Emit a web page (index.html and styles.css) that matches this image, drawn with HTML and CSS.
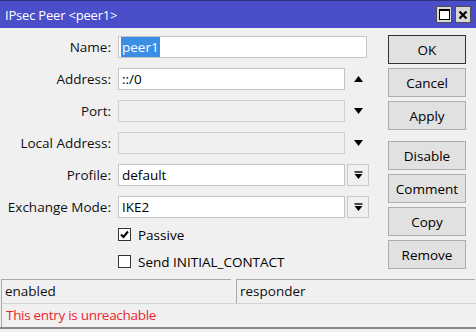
FILE: index.html
```html
<!DOCTYPE html>
<html>
<head>
<meta charset="utf-8">
<link rel="stylesheet" href="styles.css">
</head>
<body>
<div class="window">
  <div class="titlebar">
    <span class="title">IPsec Peer &lt;peer1&gt;</span>
    <div class="tbtns">
      <span class="tbtn"><span class="maxbox"></span></span>
      <span class="tbtn"><svg width="10" height="10" viewBox="0 0 10 10"><path d="M1.5 1.5 L8.5 8.5 M8.5 1.5 L1.5 8.5" stroke="#000" stroke-width="2.2"/></svg></span>
    </div>
  </div>
  <div class="content">
    <div class="form">
      <div class="row">
        <label class="lbl">Name:</label>
        <div class="field full"><span class="sel">peer1</span></div>
      </div>
      <div class="row">
        <label class="lbl">Address:</label>
        <div class="field">::/0</div>
        <span class="arrow"><svg width="9" height="6" viewBox="0 0 9 6"><path d="M0 6 L4.5 0 L9 6 Z" fill="#000"/></svg></span>
      </div>
      <div class="row">
        <label class="lbl">Port:</label>
        <div class="field dis"></div>
        <span class="arrow"><svg width="9" height="6" viewBox="0 0 9 6"><path d="M0 0 L4.5 6 L9 0 Z" fill="#000"/></svg></span>
      </div>
      <div class="row">
        <label class="lbl">Local Address:</label>
        <div class="field dis"></div>
        <span class="arrow"><svg width="9" height="6" viewBox="0 0 9 6"><path d="M0 0 L4.5 6 L9 0 Z" fill="#000"/></svg></span>
      </div>
      <div class="row">
        <label class="lbl">Profile:</label>
        <div class="field">default</div>
        <span class="ddbtn"><svg width="9" height="9" viewBox="0 0 9 9"><path d="M0.5 1 H8.5" stroke="#000" stroke-width="1.4"/><path d="M0.5 3 H8.5 L4.5 8 Z" fill="#000"/></svg></span>
      </div>
      <div class="row">
        <label class="lbl">Exchange Mode:</label>
        <div class="field">IKE2</div>
        <span class="ddbtn"><svg width="9" height="9" viewBox="0 0 9 9"><path d="M0.5 1 H8.5" stroke="#000" stroke-width="1.4"/><path d="M0.5 3 H8.5 L4.5 8 Z" fill="#000"/></svg></span>
      </div>
      <div class="checks">
        <div class="chk"><span class="box"><svg width="11" height="11" viewBox="0 0 11 11"><path d="M2 5.5 L4.5 8 L9 2.5" fill="none" stroke="#000" stroke-width="2"/></svg></span>Passive</div>
        <div class="chk"><span class="box"></span>Send INITIAL_CONTACT</div>
      </div>
    </div>
    <div class="buttons">
      <div class="grp">
        <button class="btn def">OK</button>
        <button class="btn">Cancel</button>
        <button class="btn">Apply</button>
      </div>
      <div class="grp">
        <button class="btn">Disable</button>
        <button class="btn">Comment</button>
        <button class="btn">Copy</button>
        <button class="btn">Remove</button>
      </div>
    </div>
  </div>
  <div class="status">
    <div class="cells">
      <div class="cell c1">enabled</div>
      <div class="cell c2">responder</div>
    </div>
    <div class="msg">This entry is unreachable</div>
  </div>
</div>
</body>
</html>
```

FILE: styles.css
```css
* { box-sizing: border-box; }
html, body { margin: 0; padding: 0; }
body {
  width: 476px;
  height: 332px;
  overflow: hidden;
  background: #f0f0f0;
  font-family: "Open Sans", "Liberation Sans", sans-serif;
  font-size: 13.5px;
  color: #000;
}
.window {
  width: 476px;
  height: 332px;
  display: flex;
  flex-direction: column;
  background: #f0f0f0;
}
.titlebar {
  height: 28px;
  background: #4a4ec8;
  border-top: 1px solid #2d2f80;
  display: flex;
  align-items: center;
  justify-content: space-between;
  padding: 0 5px 0 5px;
}
.title {
  color: #fff;
  font-size: 13px;
  letter-spacing: -0.2px;
}
.tbtns { display: flex; gap: 3px; }
.tbtn {
  width: 16px;
  height: 17px;
  background: #d8d8d8;
  border: 1px solid #505050;
  display: flex;
  align-items: center;
  justify-content: center;
}
.maxbox {
  width: 11px;
  height: 11px;
  border: 1px solid #000;
  border-top-width: 2px;
  background: #fff;
}
.content {
  display: flex;
  height: 250px;
}
.form {
  width: 388px;
  padding-top: 8px;
  display: flex;
  flex-direction: column;
  gap: 10px;
}
.row {
  display: flex;
  align-items: center;
  height: 22px;
}
.lbl {
  width: 118px;
  text-align: right;
  padding-right: 7px;
  color: #111;
  white-space: nowrap;
}
.field {
  width: 227px;
  height: 22px;
  background: #fff;
  border: 1px solid #c4c4c4;
  padding: 0 3px;
  line-height: 20px;
  white-space: nowrap;
  color: #000;
}
.field.full { width: 249px; }
.field.dis { background: #f0f0f0; border-color: #cfcfcf; }
.sel {
  background: #3a8ee6;
  color: #fff;
  padding: 1px 1px;
  margin-left: -1px;
}
.arrow {
  width: 22px;
  height: 22px;
  display: flex;
  align-items: center;
  justify-content: center;
  padding-left: 4px;
}
.ddbtn {
  width: 22px;
  height: 22px;
  margin-left: 2px;
  border: 1px solid #c9c9c9;
  background: #f0f0f0;
  display: flex;
  align-items: center;
  justify-content: center;
}
.checks {
  display: flex;
  flex-direction: column;
  gap: 8px;
  padding-left: 118px;
  margin-top: -3px;
}
.chk {
  display: flex;
  align-items: center;
  height: 19px;
  gap: 7px;
}
.box {
  width: 13px;
  height: 13px;
  border: 1px solid #333;
  background: #fff;
  display: flex;
  align-items: center;
  justify-content: center;
}
.buttons {
  width: 78px;
  padding-top: 7px;
  display: flex;
  flex-direction: column;
  gap: 11px;
}
.grp {
  display: flex;
  flex-direction: column;
  gap: 4px;
}
.btn {
  width: 78px;
  height: 29px;
  background: #e1e1e1;
  border: 1px solid #adadad;
  font-family: inherit;
  font-size: 13.5px;
  color: #000;
  padding: 0;
  margin: 0;
}
.btn.def { border: 1px solid #333; box-shadow: inset 0 0 0 1px #e1e1e1; }
.status {
  display: flex;
  flex-direction: column;
  border-bottom: 2px solid #8a8a8a;
  margin-top: 1px;
}
.cells {
  display: flex;
  gap: 5px;
  height: 24px;
}
.cell {
  border-top: 1px solid #a8a8a8;
  border-left: 1px solid #a8a8a8;
  padding: 0 3px;
  line-height: 22px;
  color: #111;
}
.c1 { width: 230px; margin-left: 1px; }
.c2 { width: 239px; }
.msg {
  height: 24px;
  line-height: 23px;
  color: #e8272c;
  padding-left: 4px;
  margin-left: 1px;
  border-left: 1px solid #a8a8a8;
  border-top: 1px solid #d4d4d4;
  letter-spacing: -0.3px;
}
```
